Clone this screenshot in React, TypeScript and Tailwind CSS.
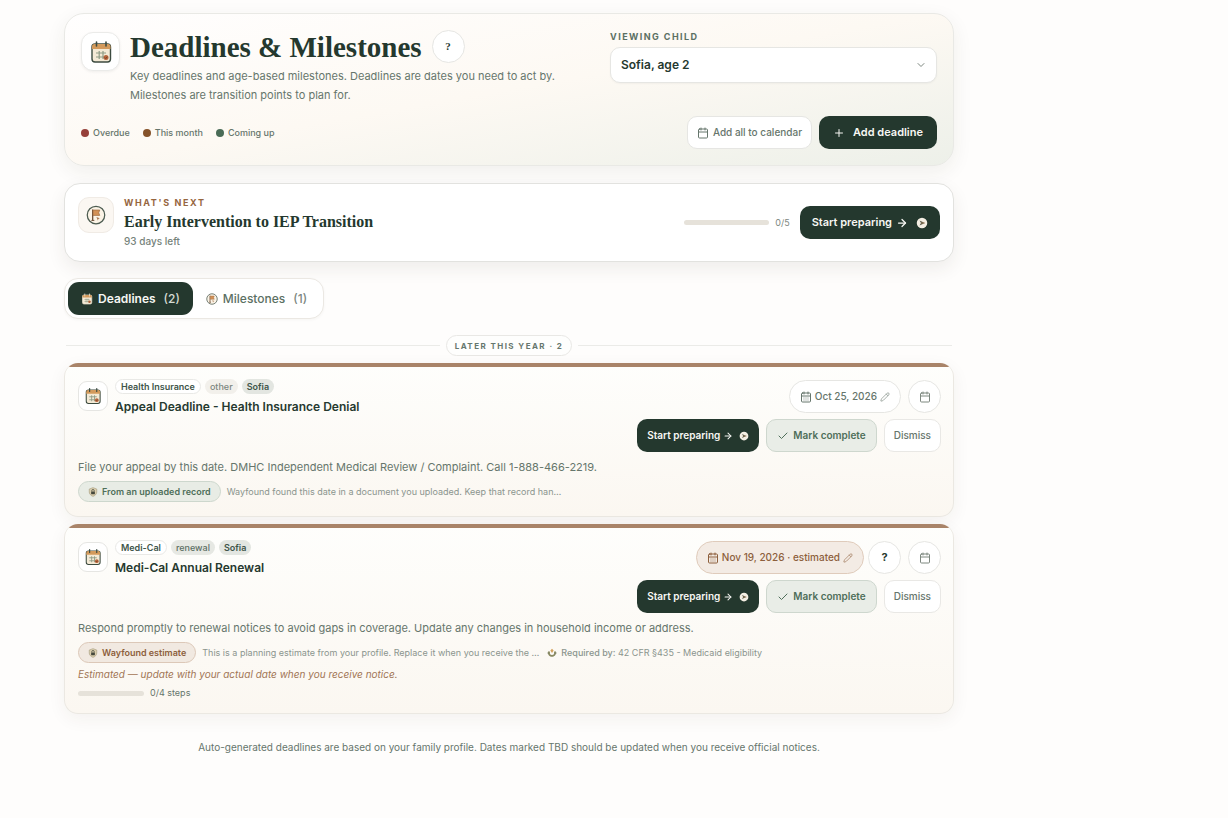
import type { ReactNode } from 'react'
import { ArrowRight, Calendar, CalendarDays, Check, ChevronDown, Pencil, Plus } from 'lucide-react'
import clsx from 'clsx'

type Tag = { label: string; className: string }

type Deadline = {
  title: string
  tags: Tag[]
  date: string
  estimated: boolean
  description: string
  source: string
  sourceNote: string
  requiredBy?: string
  note?: string
  steps?: string
}

const tagStyles = {
  outline: 'border border-[#e9e9e6] bg-white px-[5px] font-semibold text-[#40554a]',
  muted: 'bg-[#f2f0eb] px-[5px] font-medium text-[#7d877f]',
  grey: 'bg-[#e6e8e3] px-[5px] font-medium text-[#5d6f64]',
  child: 'bg-[#e3e6e1] px-[5px] font-semibold text-[#40554a]',
}

const deadlines: Deadline[] = [
  {
    title: 'Appeal Deadline - Health Insurance Denial',
    tags: [
      { label: 'Health Insurance', className: tagStyles.outline },
      { label: 'other', className: tagStyles.muted },
      { label: 'Sofia', className: tagStyles.child },
    ],
    date: 'Oct 25, 2026',
    estimated: false,
    description: 'File your appeal by this date. DMHC Independent Medical Review / Complaint. Call 1-888-466-2219.',
    source: 'From an uploaded record',
    sourceNote: 'Wayfound found this date in a document you uploaded. Keep that record han…',
  },
  {
    title: 'Medi-Cal Annual Renewal',
    tags: [
      { label: 'Medi-Cal', className: tagStyles.outline },
      { label: 'renewal', className: tagStyles.grey },
      { label: 'Sofia', className: tagStyles.child },
    ],
    date: 'Nov 19, 2026 · estimated',
    estimated: true,
    description:
      'Respond promptly to renewal notices to avoid gaps in coverage. Update any changes in household income or address.',
    source: 'Wayfound estimate',
    sourceNote: 'This is a planning estimate from your profile. Replace it when you receive the …',
    requiredBy: '42 CFR §435 - Medicaid eligibility',
    note: 'Estimated — update with your actual date when you receive notice.',
    steps: '0/4 steps',
  },
]

const legend = [
  { label: 'Overdue', dot: 'bg-[#96403a]' },
  { label: 'This month', dot: 'bg-[#85522a]' },
  { label: 'Coming up', dot: 'bg-[#4a6b56]' },
]

export default function App() {
  return (
    <div className="min-h-screen bg-[#fefdfc] font-['Inter',sans-serif] text-[#26392f]">
      <main className="w-full max-w-[954px] pt-[13px] pb-16 pl-16">
        <PageHeader />
        <WhatsNext />
        <Tabs />

        <div className="mt-4 mb-[7px] flex items-center gap-1.5 px-0.5">
          <span className="h-px flex-1 bg-[#ebebe8]" />
          <h2 className="flex h-[21px] items-center rounded-full border border-[#e9e8e5] bg-[#fefefd] px-2 text-[8px] font-bold tracking-[0.18em] text-[#66776d]">
            LATER THIS YEAR · 2
          </h2>
          <span className="h-px flex-1 bg-[#ebebe8]" />
        </div>

        <div className="flex flex-col gap-[7px]">
          {deadlines.map((d) => (
            <DeadlineCard key={d.title} deadline={d} />
          ))}
        </div>

        <p className="mt-[25px] text-center text-[10px] leading-4 text-[#66766c]">
          Auto-generated deadlines are based on your family profile. Dates marked TBD should be updated when you
          receive official notices.
        </p>
      </main>
    </div>
  )
}

function PageHeader() {
  return (
    <header className="rounded-[20px] border border-[#e9e9e5] bg-linear-[170deg,#fffefe_0%,#fdf9f3_50%,#edf0e9_100%] p-4 shadow-[0_6px_20px_rgba(60,50,35,0.07)]">
      <div className="flex items-start justify-between gap-4">
        <div className="flex items-start gap-2.5">
          <span className="mt-0.5 flex size-[39px] shrink-0 items-center justify-center rounded-xl border border-[#ebebe9] bg-white shadow-[0_1px_3px_rgba(0,0,0,0.06)]">
            <CalendarArt className="size-6" />
          </span>
          <div>
            <div className="flex items-center gap-2.5">
              <h1 className="font-['Liberation_Serif',serif] text-[29px] leading-8 font-bold text-[#24382e]">
                Deadlines &amp; Milestones
              </h1>
              <HelpButton label="About deadlines and milestones" className="font-['Liberation_Serif',serif]" />
            </div>
            <p className="mt-1 max-w-[446px] text-[11px] leading-[19px] text-[#66766c]">
              Key deadlines and age-based milestones. Deadlines are dates you need to act by. Milestones are
              transition points to plan for.
            </p>
          </div>
        </div>

        <div className="w-[327px] shrink-0">
          <label htmlFor="child" className="block text-[9px] leading-[14px] font-bold tracking-[0.16em] text-[#5b7063]">
            VIEWING CHILD
          </label>
          <div className="relative mt-[3px]">
            <select
              id="child"
              className="h-9 w-full appearance-none rounded-[10px] border border-[#e6e6e3] bg-white px-2.5 text-[12px] font-semibold text-[#26392f] shadow-[0_1px_2px_rgba(0,0,0,0.04)]"
            >
              <option>Sofia, age 2</option>
            </select>
            <ChevronDown className="pointer-events-none absolute top-3 right-2.5 size-3 text-[#7d877f]" />
          </div>
        </div>
      </div>

      <div className="mt-[11px] flex items-center justify-between">
        <ul className="flex gap-[13px] text-[9px] font-medium text-[#66766c]">
          {legend.map((item) => (
            <li key={item.label} className="flex items-center gap-1">
              <span className={clsx('size-2 rounded-full', item.dot)} />
              {item.label}
            </li>
          ))}
        </ul>
        <div className="flex gap-[7px]">
          <button className="flex h-[33px] items-center gap-1 rounded-[10px] border border-[#e6e6e3] bg-white px-[9px] text-[10px] font-medium text-[#66766c]">
            <Calendar className="size-3" />
            Add all to calendar
          </button>
          <button className="flex h-[33px] items-center gap-2 rounded-[10px] bg-[#24382e] px-3.5 text-[11px] font-semibold text-[#f7f7f3]">
            <Plus className="size-3" />
            Add deadline
          </button>
        </div>
      </div>
    </header>
  )
}

function WhatsNext() {
  return (
    <section className="mt-[17px] flex items-center rounded-[16px] border border-[#e2e2df] bg-white p-[13px] shadow-[0_7px_18px_rgba(60,50,35,0.08)]">
      <span className="flex size-9 shrink-0 items-center justify-center self-start rounded-[11px] border border-[#f0ebe5] bg-[#fbf7f2]">
        <FlagArt className="size-5" />
      </span>
      <div className="ml-2.5 flex-1">
        <p className="text-[9px] leading-3 font-bold tracking-[0.18em] text-[#96663f]">WHAT'S NEXT</p>
        <h2 className="mt-1 font-['Liberation_Serif',serif] text-[16px] leading-[18px] font-bold text-[#24382e]">
          Early Intervention to IEP Transition
        </h2>
        <p className="mt-[3px] text-[10px] leading-[14px] font-medium text-[#76837b]">93 days left</p>
      </div>
      <span className="h-[5px] w-[85px] rounded-full bg-[#e6e2da]" />
      <span className="mr-2.5 ml-1.5 text-[9px] text-[#7d877f]">0/5</span>
      <button className="flex h-[33px] items-center rounded-[10px] bg-[#24382e] px-3 text-[11px] font-semibold text-[#f7f7f3]">
        Start preparing
        <ArrowRight className="ml-1 size-3" strokeWidth={2.5} />
        <CompassArt className="ml-2 size-3" />
      </button>
    </section>
  )
}

function Tabs() {
  return (
    <div
      role="tablist"
      className="mt-4 flex w-fit rounded-[14px] border border-[#ebe8e3] bg-white p-[3px] text-[12px] shadow-[0_1px_3px_rgba(60,50,35,0.04)]"
    >
      <button
        role="tab"
        aria-selected="true"
        className="flex h-[33px] items-center rounded-[11px] bg-[#24382e] px-[13px] font-semibold text-[#f7f7f3]"
      >
        <CalendarArt className="mr-[5px] size-3" light />
        Deadlines
        <span className="ml-2 font-medium text-[#d5dbd3]">(2)</span>
      </button>
      <button
        role="tab"
        aria-selected="false"
        className="flex h-[33px] items-center rounded-[11px] px-[13px] font-medium text-[#5b7063]"
      >
        <FlagArt className="mr-[5px] size-3" />
        Milestones
        <span className="ml-2 text-[#7d877f]">(1)</span>
      </button>
    </div>
  )
}

function DeadlineCard({ deadline }: { deadline: Deadline }) {
  return (
    <article className="overflow-hidden rounded-[14px] border border-t-0 border-[#ebe8e2] bg-linear-to-b from-[#fefefc] to-[#fbf7f1] shadow-[0_5px_18px_rgba(60,50,35,0.06)]">
      <div className="h-1 bg-[#a98469]" />
      <div className="pt-3 pr-3 pb-3.5 pl-[13px]">
        <div className="flex items-start justify-between">
          <div className="flex items-start">
            <span className="mt-0.5 flex size-[30px] shrink-0 items-center justify-center rounded-[9px] border border-[#e6e6e3] bg-white">
              <CalendarArt className="size-[18px]" />
            </span>
            <div className="ml-[7px]">
              <div className="flex h-[15px] gap-1">
                {deadline.tags.map((tag) => (
                  <span
                    key={tag.label}
                    className={clsx('flex items-center rounded-full text-[9px] leading-3', tag.className)}
                  >
                    {tag.label}
                  </span>
                ))}
              </div>
              <h3 className="mt-1 text-[12px] leading-[18px] font-semibold text-[#26392f]">{deadline.title}</h3>
            </div>
          </div>

          <div className="flex flex-col items-end gap-1.5 pt-px">
            <div className="flex items-center">
              <button
                className={clsx(
                  'flex h-[33px] items-center gap-[3px] rounded-full border px-2.5 text-[10px] font-medium',
                  deadline.estimated
                    ? 'border-[#dfcbbb] bg-[#f3ebe4] text-[#8d5f3c]'
                    : 'border-[#e6e6e3] bg-white text-[#66766c]',
                )}
              >
                <CalendarDays className="size-3" />
                {deadline.date}
                <Pencil className="size-2.5 opacity-80" strokeWidth={1.7} />
              </button>
              {deadline.estimated && <HelpButton label="About estimated dates" className="ml-1" />}
              <button
                aria-label="Add to calendar"
                className="ml-[7px] flex size-[33px] items-center justify-center rounded-full border border-[#e6e6e3] bg-white text-[#7d877f]"
              >
                <Calendar className="size-3" />
              </button>
            </div>
            <div className="flex gap-[7px] text-[10px]">
              <button className="flex h-[33px] items-center rounded-[10px] bg-[#24382e] px-2.5 font-semibold text-[#f7f7f3]">
                Start preparing
                <ArrowRight className="ml-[3px] size-2.5" strokeWidth={2.5} />
                <CompassArt className="ml-1.5 size-2.5" />
              </button>
              <button className="flex h-[33px] items-center gap-1 rounded-[10px] border border-[#ced7ce] bg-[#e9ede7] px-2.5 font-semibold text-[#4f6f5a]">
                <Check className="size-3" />
                Mark complete
              </button>
              <button className="h-[33px] rounded-[10px] border border-[#e9e8e5] bg-white px-[9px] font-medium text-[#66766c]">
                Dismiss
              </button>
            </div>
          </div>
        </div>

        <p className="mt-[7px] text-[11px] leading-4 text-[#66766c]">{deadline.description}</p>

        <div className="mt-1.5 flex items-center text-[9px] text-[#8b958e]">
          <span
            className={clsx(
              'flex h-[21px] items-center gap-1 rounded-full border px-[9px] font-semibold',
              deadline.estimated
                ? 'border-[#dcc8b8] bg-[#f1e9e1] text-[#8d5f3c]'
                : 'border-[#cdd7cd] bg-[#e8ece5] text-[#4f6f5a]',
            )}
          >
            <ShieldArt className="size-2.5" />
            {deadline.source}
          </span>
          <span className="ml-1.5">{deadline.sourceNote}</span>
          {deadline.requiredBy && (
            <span className="ml-2 flex items-center gap-1">
              <LaurelArt className="size-2.5" />
              <span>
                <span className="font-medium">Required by:</span> {deadline.requiredBy}
              </span>
            </span>
          )}
        </div>

        {deadline.note && <p className="mt-[3px] text-[10px] leading-4 text-[#a17555] italic">{deadline.note}</p>}

        {deadline.steps && (
          <div className="mt-[5px] flex items-center gap-1.5 text-[9px] leading-3 text-[#66766c]">
            <span className="h-[5px] w-[66px] rounded-full bg-[#e6e2da]" />
            {deadline.steps}
          </div>
        )}
      </div>
    </article>
  )
}

function HelpButton({ label, className }: { label: string; className?: string }) {
  return (
    <button
      aria-label={label}
      className={clsx(
        'flex size-[33px] items-center justify-center rounded-full border border-[#e6e6e3] bg-white text-[11px] font-bold text-[#26392f]',
        className,
      )}
    >
      ?
    </button>
  )
}

type ArtProps = { className?: string; light?: boolean }

function Art({ className, children }: { className?: string; children: ReactNode }) {
  return (
    <svg viewBox="0 0 24 24" fill="none" aria-hidden="true" className={clsx('shrink-0', className)}>
      {children}
    </svg>
  )
}

function CalendarArt({ className, light }: ArtProps) {
  const line = light ? '#e9dfca' : '#3c4b40'
  return (
    <Art className={className}>
      <rect x="3" y="4" width="18.5" height="18" rx="3" fill="#f4ead6" stroke={line} strokeWidth="1.4" />
      <path d="M3 9V6.5A2.5 2.5 0 0 1 5.500 4H19a2.500 2.500 0 0 1 2.500 2.500V9z" fill="#d39a5c" />
      <path d="M7.5 2v4M17 2v4" stroke={line} strokeWidth="1.6" strokeLinecap="round" />
      <path d="M7 13h10M7 17h8M10.200 11v8M14 11v8" stroke="#8f9c86" strokeWidth="1.2" />
      <circle cx="17" cy="17.5" r="2.5" fill="#b8653c" />
      <path d="m15.800 17.500 1 1 1.600-1.800" stroke="#603723" strokeWidth=".8" />
    </Art>
  )
}

function FlagArt({ className }: ArtProps) {
  return (
    <Art className={className}>
      <circle cx="12" cy="12" r="10.5" fill="#fbf3e6" stroke="#4c5b50" strokeWidth="1.5" />
      <path d="M8 6v12.5" stroke="#70513a" strokeWidth="1.6" strokeLinecap="round" />
      <path d="M8.5 6h8l-1.2 3.3 1.2 3.2h-8z" fill="#d39055" stroke="#9b683c" strokeWidth=".8" />
      <path d="M12.5 14.5l4 1.5-1.6.8-.7 1.7z" fill="#aa7852" />
      <path d="M6.5 18.5h3.5" stroke="#70513a" strokeWidth="1.2" />
    </Art>
  )
}

function CompassArt({ className }: ArtProps) {
  return (
    <Art className={className}>
      <circle cx="12" cy="12" r="10.5" fill="#f4eee3" />
      <path d="m7 7 11 5-11 5 3-5z" fill="#5c5c4c" />
      <path d="m10 12h8" stroke="#c58a55" strokeWidth="1" />
    </Art>
  )
}

function ShieldArt({ className }: ArtProps) {
  return (
    <Art className={className}>
      <path d="M12 1.5 21 5v7c0 5-4 8.5-9 10.5C7 20.5 3 17 3 12V5z" fill="#dccfae" stroke="#a59c7e" strokeWidth="1.5" />
      <path d="M9 11V9a3 3 0 0 1 6 0v2" stroke="#45483c" strokeWidth="1.8" />
      <rect x="7.5" y="11" width="9" height="6.5" rx="1" fill="#45483c" />
    </Art>
  )
}

function LaurelArt({ className }: ArtProps) {
  return (
    <Art className={className}>
      <path d="M4 7c-4 7 1 14 8 14s12-7 8-14l-3 2c1 5-1 8-5 8s-6-3-5-8z" fill="#8a8a62" />
      <path d="m12 2 4 4-4 6-4-6z" fill="#d3a35f" />
      <path d="M1 12h5M18 12h5" stroke="#6d7353" strokeWidth="2" />
    </Art>
  )
}
